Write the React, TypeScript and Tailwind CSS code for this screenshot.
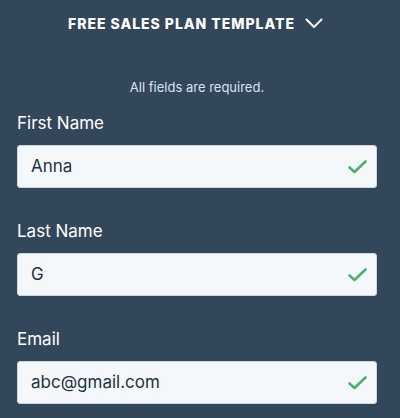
import React from "react";

const Check = () => (
  <svg width="19" height="14" viewBox="0 0 19 14" fill="none" className="shrink-0">
    <path d="M1.5 7.5L6.5 12L17.5 1.5" stroke="#4fb06f" strokeWidth="2.6" strokeLinecap="round" strokeLinejoin="round" />
  </svg>
);

const Field = ({ label, value }: { label: string; value: string }) => (
  <div className="flex flex-col">
    <label className="text-[17px] leading-[20px] text-white h-[20px]">{label}</label>
    <div className="mt-[12px] h-[43px] rounded-[3px] border border-[#cbd6e2] bg-[#f5f8fa] flex items-center justify-between pl-[13px] pr-[9px]">
      <span className="text-[17px] text-[#213343]">{value}</span>
      <Check />
    </div>
  </div>
);

export default function App() {
  return (
    <div className="w-[400px] h-[418px] bg-[#33475b] overflow-hidden" style={{ fontFamily: "Inter, 'Noto Sans', sans-serif" }}>
      <div className="flex items-center justify-center gap-[10px] pt-[12px] h-[34px] pr-[9px]">
        <span className="text-[14px] font-extrabold tracking-[0.07em] text-white uppercase">Free Sales Plan Template</span>
        <svg width="18" height="11" viewBox="0 0 18 11" fill="none">
          <path d="M1.5 1.5L9 9L16.5 1.5" stroke="white" strokeWidth="2" strokeLinecap="round" strokeLinejoin="round" />
        </svg>
      </div>
      <p className="mt-[45px] text-center text-[13px] leading-[16px] text-[#dbe4ee] pr-[6px]">All fields are required.</p>
      <div className="mt-[18px] px-[17px] pr-[23px] flex flex-col gap-[33px]">
        <Field label="First Name" value="Anna" />
        <Field label="Last Name" value="G" />
        <Field label="Email" value="abc@gmail.com" />
      </div>
    </div>
  );
}
